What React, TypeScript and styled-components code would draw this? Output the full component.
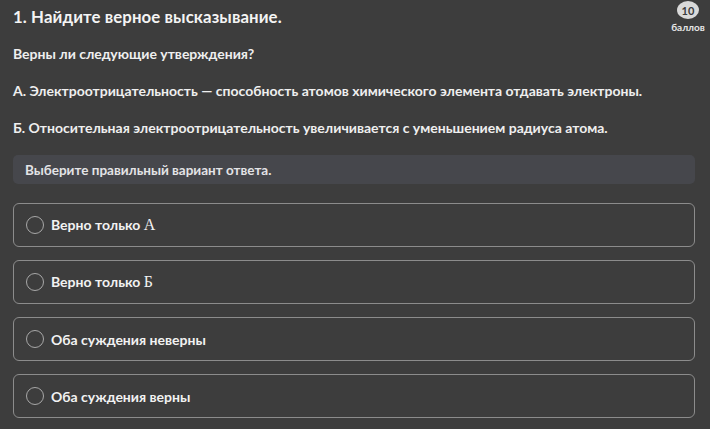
import React from 'react'
import styled, { createGlobalStyle } from 'styled-components'

const GlobalStyle = createGlobalStyle`
  html, body {
    margin: 0;
    padding: 0;
    background: #3d3d3d;
  }
  body {
    font-family: Lato, "Noto Sans", "Liberation Sans", sans-serif;
    color: #f2f2f2;
  }
`

const Page = styled.div`
  width: 710px;
  height: 429px;
  box-sizing: border-box;
  padding: 0 14px 0 13px;
  background: #3d3d3d;
  overflow: hidden;
`

const Header = styled.div`
  display: flex;
  justify-content: space-between;
  align-items: flex-start;
  height: 42px;
`

const Title = styled.h1`
  margin: 6px 0 0;
  font-size: 16.8px;
  font-weight: 700;
  color: #f4f4f4;
  letter-spacing: 0.1px;
`

const Score = styled.div`
  display: flex;
  flex-direction: column;
  align-items: center;
  margin-top: 1px;
  margin-right: -12px;
  width: 40px;
`

const ScoreBadge = styled.div`
  width: 22px;
  height: 18px;
  border-radius: 50%;
  background: #d9d9d9;
  color: #3a3a3a;
  font-size: 11px;
  font-weight: 700;
  display: flex;
  align-items: center;
  justify-content: center;
`

const ScoreLabel = styled.div`
  margin-top: 2px;
  font-size: 10px;
  font-weight: 700;
  color: #e6e6e6;
`

const Text = styled.p`
  margin: 0;
  font-size: 14px;
  font-weight: 700;
  line-height: 16px;
  color: #efefef;
`

const Lead = styled(Text)`
  margin-top: 4px;
`

const Statement = styled(Text)`
  margin-top: 21px;
`

const Hint = styled.div`
  margin-top: 19px;
  height: 29px;
  border-radius: 5px;
  background: #46474c;
  display: flex;
  align-items: center;
  padding-left: 12px;
  font-size: 13.5px;
  font-weight: 700;
  color: #e3e3e6;
  margin-right: 1px;
`

const Options = styled.div`
  margin-top: 19px;
  display: flex;
  flex-direction: column;
  gap: 13px;
`

const Option = styled.label`
  height: 44px;
  box-sizing: border-box;
  border: 1.5px solid #8c8c8c;
  border-radius: 6px;
  display: flex;
  align-items: center;
  padding-left: 12px;
  gap: 7px;
  cursor: pointer;
  margin-right: 1px;
`

const Radio = styled.span`
  width: 18px;
  height: 18px;
  box-sizing: border-box;
  border: 1.5px solid #a8a8a8;
  border-radius: 50%;
  flex: none;
`

const OptionText = styled.span`
  font-size: 14px;
  font-weight: 700;
  color: #f2f2f2;
`

const Letter = styled.span`
  font-family: "Liberation Serif", serif;
  font-weight: 400;
  font-size: 16px;
`

const options: React.ReactNode[] = [
  <>Верно только <Letter>А</Letter></>,
  <>Верно только <Letter>Б</Letter></>,
  'Оба суждения неверны',
  'Оба суждения верны',
]

export default function App() {
  return (
    <>
      <GlobalStyle />
      <Page>
        <Header>
          <Title>1. Найдите верное высказывание.</Title>
          <Score>
            <ScoreBadge>10</ScoreBadge>
            <ScoreLabel>баллов</ScoreLabel>
          </Score>
        </Header>
        <Lead>Верны ли следующие утверждения?</Lead>
        <Statement>А. Электроотрицательность — способность атомов химического элемента отдавать электроны.</Statement>
        <Statement>Б. Относительная электроотрицательность увеличивается с уменьшением радиуса атома.</Statement>
        <Hint>Выберите правильный вариант ответа.</Hint>
        <Options>
          {options.map((o, i) => (
            <Option key={i}>
              <Radio />
              <OptionText>{o}</OptionText>
            </Option>
          ))}
        </Options>
      </Page>
    </>
  )
}
